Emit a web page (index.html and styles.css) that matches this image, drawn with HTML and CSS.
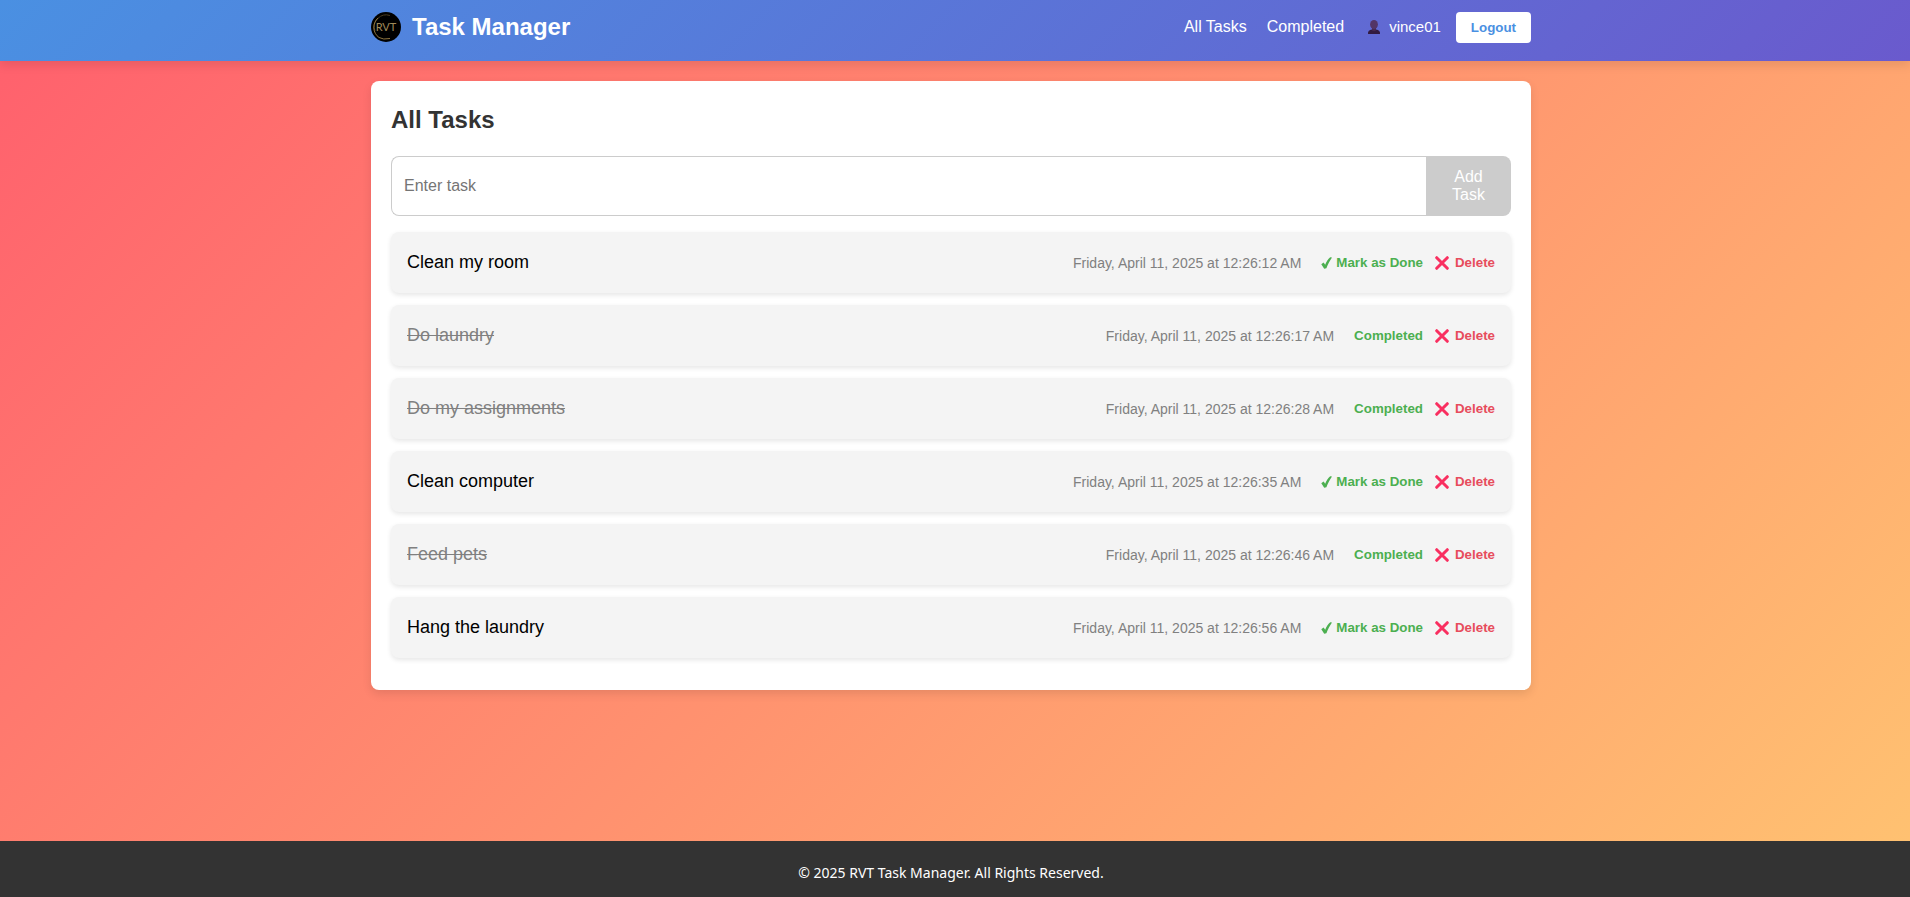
FILE: index.html
```html
<!DOCTYPE html>
<html lang="en">
<head>
<meta charset="utf-8">
<title>Task Manager</title>
<link rel="stylesheet" href="styles.css">
</head>
<body>
<svg class="sprite" aria-hidden="true">
  <symbol id="check" viewBox="0 0 11 12"><path d="M0.300 7.200 2.600 5.600 4.200 7.800C5.400 4.800 7 2 9.200.3L11 .6C8.800 3.800 7 7.200 5.400 11.300L3.200 11.700Z" fill="#4caf50"/></symbol>
  <symbol id="cross" viewBox="0 0 14 14"><path d="M1.700 1.700 12.300 12.300M12.300 1.700 1.700 12.300" stroke="#f92f60" stroke-width="3" stroke-linecap="round"/></symbol>
</svg>
<header class="header">
  <div class="header-inner">
    <div class="brand">
      <svg class="logo" viewBox="0 0 30 30" role="img" aria-label="RVT logo">
        <circle cx="15" cy="15" r="15" fill="#000"/>
        <path d="M19 3.500A12 12 0 0 0 4 19" fill="none" stroke="#4a3c20" stroke-width="1"/>
        <path d="M7 6A12.500 12.500 0 0 0 8 25.500Q12 28 19 26.500" fill="none" stroke="#8d7440" stroke-width="1"/>
        <text x="15" y="19" text-anchor="middle" class="logo-text">RVT</text>
      </svg>
      <h1 class="brand-name">Task Manager</h1>
    </div>
    <nav class="nav">
      <a class="nav-link" href="#">All Tasks</a>
      <a class="nav-link" href="#">Completed</a>
      <span class="user">
        <svg class="user-icon" viewBox="0 0 14 14" aria-hidden="true"><path d="M1 14Q.5 10 5 9.500H9Q13.500 10 13 14Z" fill="#321b41"/><path d="M5 8H9V10.500Q7 12 5 10.500Z" fill="#46294f"/><ellipse cx="7" cy="4.600" rx="3.900" ry="4.600" fill="#533566"/></svg>
        <span>vince01</span>
      </span>
      <button class="logout" type="button">Logout</button>
    </nav>
  </div>
</header>
<main class="main">
  <section class="card">
    <h2 class="title">All Tasks</h2>
    <form class="add-form">
      <input class="add-input" type="text" placeholder="Enter task" aria-label="Enter task">
      <button class="add-button" type="button">Add Task</button>
    </form>
    <ul class="tasks">
      <li class="task"><span class="name">Clean my room</span><time class="date">Friday, April 11, 2025 at 12:26:12 AM</time><div class="actions"><button class="action done" type="button"><svg class="check"><use href="#check"/></svg>Mark as Done</button><button class="action delete" type="button"><svg class="cross"><use href="#cross"/></svg>Delete</button></div></li>
      <li class="task"><span class="name struck">Do laundry</span><time class="date">Friday, April 11, 2025 at 12:26:17 AM</time><div class="actions"><button class="action done" type="button">Completed</button><button class="action delete" type="button"><svg class="cross"><use href="#cross"/></svg>Delete</button></div></li>
      <li class="task"><span class="name struck">Do my assignments</span><time class="date">Friday, April 11, 2025 at 12:26:28 AM</time><div class="actions"><button class="action done" type="button">Completed</button><button class="action delete" type="button"><svg class="cross"><use href="#cross"/></svg>Delete</button></div></li>
      <li class="task"><span class="name">Clean computer</span><time class="date">Friday, April 11, 2025 at 12:26:35 AM</time><div class="actions"><button class="action done" type="button"><svg class="check"><use href="#check"/></svg>Mark as Done</button><button class="action delete" type="button"><svg class="cross"><use href="#cross"/></svg>Delete</button></div></li>
      <li class="task"><span class="name struck">Feed pets</span><time class="date">Friday, April 11, 2025 at 12:26:46 AM</time><div class="actions"><button class="action done" type="button">Completed</button><button class="action delete" type="button"><svg class="cross"><use href="#cross"/></svg>Delete</button></div></li>
      <li class="task"><span class="name">Hang the laundry</span><time class="date">Friday, April 11, 2025 at 12:26:56 AM</time><div class="actions"><button class="action done" type="button"><svg class="check"><use href="#check"/></svg>Mark as Done</button><button class="action delete" type="button"><svg class="cross"><use href="#cross"/></svg>Delete</button></div></li>
    </ul>
  </section>
</main>
<footer class="footer">© 2025 RVT Task Manager. All Rights Reserved.</footer>
</body>
</html>
```
FILE: styles.css
```css
* { box-sizing: border-box; }

body {
  margin: 0;
  min-height: 100vh;
  display: flex;
  flex-direction: column;
  font-family: "Liberation Sans", Arial, sans-serif;
  font-size: 16px;
  background: linear-gradient(135deg, #ff5f6d, #ffc371);
}

button, input { font-family: inherit; }
button { cursor: pointer; }
.sprite { display: none; }

.header {
  padding: 9px 28px 16px 20px;
  background: linear-gradient(135deg, #4a90e2, #6a5acd);
  box-shadow: 0 4px 10px rgba(0, 0, 0, 0.1);
  color: #fff;
}

.header-inner {
  display: flex;
  justify-content: space-between;
  align-items: center;
  max-width: 1160px;
  min-height: 36px;
  margin: 0 auto;
}

.brand { display: flex; align-items: center; gap: 11px; }
.logo { width: 30px; height: 30px; }
.logo-text { font-family: Lato, sans-serif; font-size: 11px; fill: #a08a5a; }
.brand-name { margin: 0; font-size: 24px; line-height: 30px; }

.nav { display: flex; align-items: center; gap: 20px; line-height: 30px; }
.nav-link { color: #fff; text-decoration: none; }
.user { display: flex; align-items: center; gap: 8px; margin: 0 -5px 0 3px; font-size: 15px; }
.user-icon { width: 14px; height: 14px; }

.logout {
  height: 31px;
  padding: 0 15px;
  border: 0;
  border-radius: 4px;
  background: #fff;
  color: #4a90e2;
  font-weight: bold;
}

.main { padding: 20px 28px 20px 20px; }

.card {
  max-width: 1160px;
  margin: 0 auto;
  padding: 20px;
  border-radius: 8px;
  background: #fff;
  box-shadow: 0 4px 10px rgba(0, 0, 0, 0.1);
}

.title { margin: 5px 0 22px; font-size: 24px; line-height: 28px; color: #333; }
.add-form { display: flex; margin-bottom: 16px; }

.add-input {
  flex: 1;
  min-width: 0;
  padding: 12px;
  border: 1px solid #ccc;
  border-right: 0;
  border-radius: 8px 0 0 8px;
  font-size: 16px;
}

.add-button {
  width: 85px;
  height: 60px;
  padding: 0 20px;
  border: 0;
  border-radius: 0 8px 8px 0;
  background: #ccc;
  color: #fff;
  font-size: 16px;
  line-height: 18px;
}

.tasks { margin: 0; padding: 0; list-style: none; }

.task {
  display: flex;
  align-items: center;
  min-height: 61px;
  margin-bottom: 12px;
  padding: 0 16px;
  border-radius: 8px;
  background: #f4f4f4;
  box-shadow: 0 2px 5px rgba(0, 0, 0, 0.1);
}

.name { flex: 1; font-size: 18px; }
.struck { color: gray; text-decoration: line-through; }
.date { margin-right: 20px; font-size: 14px; color: gray; }
.actions { display: flex; align-items: center; gap: 12px; }

.action {
  display: flex;
  align-items: center;
  padding: 0;
  border: 0;
  background: none;
  font-weight: bold;
}

.done { gap: 4px; color: #4caf50; }
.delete { gap: 6px; color: #e74c5c; }
.check { width: 11px; height: 12px; }
.cross { width: 14px; height: 14px; }

.footer {
  margin-top: auto;
  padding: 20px 28px 12px 20px;
  background: #333;
  color: #fff;
  font-family: "Segoe UI", "Noto Sans", sans-serif;
  font-size: 14px;
  line-height: 24px;
  text-align: center;
}
```
